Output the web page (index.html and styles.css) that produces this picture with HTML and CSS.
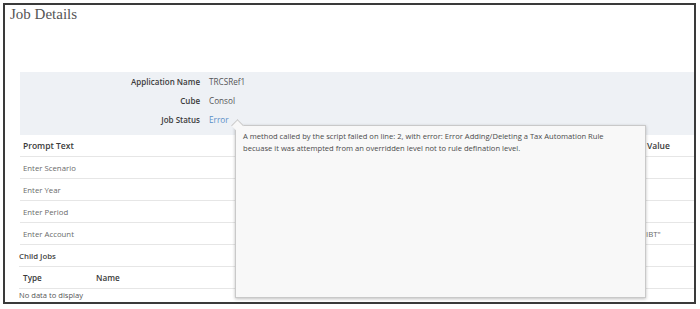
FILE: index.html
```html
<!DOCTYPE html>
<html lang="en">
<head>
    <meta charset="UTF-8">
    <meta name="viewport" content="width=device-width, initial-scale=1.0">
    <title>Job Details</title>
    <link rel="stylesheet" href="styles.css">
</head>
<body>
    <div class="frame">
        <h1 class="title">Job Details</h1>

        <div class="summary">
            <div class="summary-row">
                <span class="summary-label">Application Name</span>
                <span class="summary-value">TRCSRef1</span>
            </div>
            <div class="summary-row">
                <span class="summary-label">Cube</span>
                <span class="summary-value">Consol</span>
            </div>
            <div class="summary-row">
                <span class="summary-label">Job Status</span>
                <span class="summary-value status-error">Error</span>
            </div>
        </div>

        <div class="prompts">
            <div class="prompt-row prompt-head">
                <span>Prompt Text</span>
                <span class="value-head">Value</span>
            </div>
            <div class="prompt-row">
                <span>Enter Scenario</span>
                <span></span>
            </div>
            <div class="prompt-row">
                <span>Enter Year</span>
                <span></span>
            </div>
            <div class="prompt-row">
                <span>Enter Period</span>
                <span></span>
            </div>
            <div class="prompt-row">
                <span>Enter Account</span>
                <span>"NIBT"</span>
            </div>
        </div>

        <div class="child-jobs">
            <div class="child-title">Child Jobs</div>
            <div class="child-head">
                <span class="col-type">Type</span>
                <span>Name</span>
            </div>
            <div class="no-data">No data to display</div>
        </div>

        <div class="error-popup">
            <p>A method called by the script failed on line: 2, with error: Error Adding/Deleting a Tax Automation Rule<br>becuase it was attempted from an overridden level not to rule defination level.</p>
        </div>
    </div>
</body>
</html>
```

FILE: styles.css
```css
body {
    margin: 0;
    background-color: #fff;
    font-family: "Open Sans", "Liberation Sans", sans-serif;
}
.frame {
    position: relative;
    box-sizing: border-box;
    width: 693px;
    height: 301px;
    margin: 3px;
    border: 2px solid #3a3a3a;
}
.title {
    margin: 0;
    padding: 0 5px;
    font-family: "Liberation Serif", serif;
    font-size: 15px;
    font-weight: normal;
    line-height: 18px;
    color: #555;
}
.summary {
    margin: 49px 0 0 15px;
    padding: 0 0 6px;
    background-color: #eef1f5;
}
.summary-row {
    display: grid;
    grid-template-columns: 180px 1fr;
    column-gap: 9px;
    font-size: 8px;
    line-height: 19px;
}
.summary-label {
    text-align: right;
    font-weight: 600;
    color: #3c3c3c;
}
.summary-value {
    font-size: 8.2px;
    color: #555;
}
.status-error {
    color: #5a8fc8;
}
.prompts {
    margin-left: 15px;
}
.prompt-row {
    display: grid;
    grid-template-columns: 1fr 57px;
    height: 22px;
    align-items: center;
    padding-left: 3px;
    border-bottom: 1px solid #e6e6e6;
    box-sizing: border-box;
    font-size: 7.8px;
    color: #6a6a6a;
}
.prompt-head {
    font-size: 8.5px;
    font-weight: 600;
    color: #3a3a3a;
}
.value-head {
    padding-left: 10px;
}
.child-jobs {
    margin-left: 14px;
}
.child-title {
    height: 22px;
    line-height: 22px;
    border-bottom: 1px solid #e6e6e6;
    box-sizing: border-box;
    font-size: 7.8px;
    font-weight: 600;
    color: #444;
}
.child-head {
    display: flex;
    height: 22px;
    align-items: center;
    padding-left: 4px;
    border-bottom: 1px solid #e6e6e6;
    box-sizing: border-box;
    font-size: 8.2px;
    font-weight: 600;
    color: #3a3a3a;
}
.col-type {
    width: 73px;
}
.no-data {
    line-height: 12px;
    font-size: 7.6px;
    color: #555;
}
.error-popup {
    position: absolute;
    left: 230px;
    top: 120px;
    box-sizing: border-box;
    width: 411px;
    height: 173px;
    padding: 4px 7px;
    background-color: #f8f8f8;
    border: 1px solid #c9c9c9;
    box-shadow: 0 1px 3px rgba(0, 0, 0, 0.25);
}
.error-popup::before {
    content: "";
    position: absolute;
    left: -3px;
    top: -5px;
    width: 8px;
    height: 8px;
    background-color: #f8f8f8;
    border-top: 1px solid #c9c9c9;
    border-left: 1px solid #c9c9c9;
    transform: rotate(45deg);
}
.error-popup p {
    position: relative;
    margin: 0;
    font-size: 7.6px;
    line-height: 12px;
    color: #4a4a4a;
    white-space: nowrap;
}
```
